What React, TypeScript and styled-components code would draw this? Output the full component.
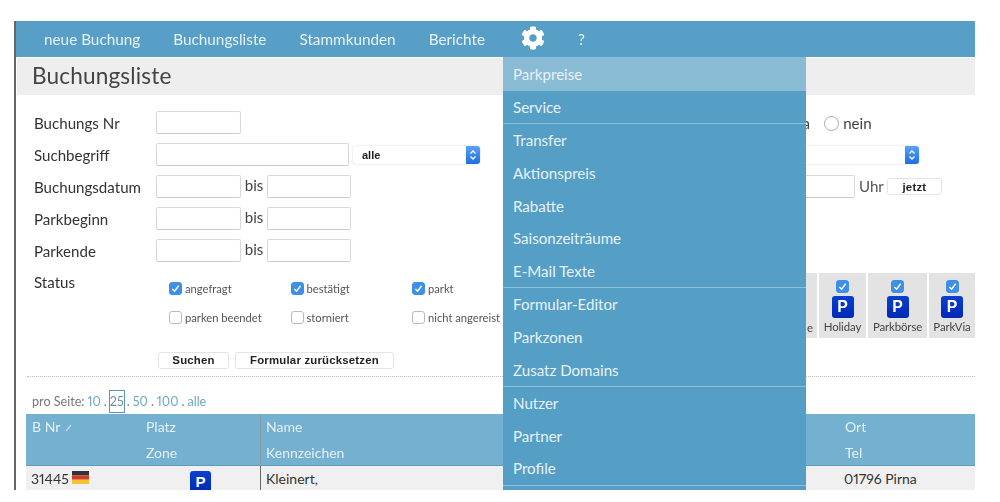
import React from "react";
import styled, { createGlobalStyle } from "styled-components";
import { FaCog } from "react-icons/fa";

const Global = createGlobalStyle`
  html, body { margin: 0; padding: 0; background: #fff; }
  body { font-family: "Lato", "Open Sans", "Liberation Sans", sans-serif; color: #333; }
  * { box-sizing: border-box; }
`;

const Soft = styled.div`
  width: 1000px;
  height: 502px;
  padding: 21px 0 0 14px;
  overflow: hidden;
  filter: blur(0.55px);
`;
const Frame = styled.div`
  position: relative;
  width: 961px;
  height: 469px;
  border-left: 2px solid #666;
  overflow: hidden;
`;
const Nav = styled.nav`
  height: 36px;
  background: #579fc7;
  display: flex;
  align-items: center;
  gap: 33px;
  padding-left: 28px;
  color: #e8f2f7;
  font-size: 15.3px;
`;
const NavItem = styled.span``;
const GearWrap = styled.span`
  display: flex;
  margin: -3px 0 0 3px;
  color: #fff;
`;
const Title = styled.h1`
  margin: 1px 0 0 1px;
  height: 37px;
  background: #eee;
  font-size: 22.6px;
  font-weight: 400;
  line-height: 35px;
  padding-left: 15px;
  color: #444;
  letter-spacing: 0.15px;
`;
const FormArea = styled.div`
  display: flex;
  height: 282px;
  padding-top: 16px;
`;
const LeftCol = styled.div`
  width: 497px;
  flex: none;
  padding-left: 18px;
`;
const RightCol = styled.div`
  flex: 1;
  padding-left: 200px;
  min-width: 0;
`;
const Row = styled.div`
  height: 32.1px;
  display: flex;
  align-items: flex-start;
  font-size: 15.1px;
`;
const Label = styled.label`
  width: 122px;
  flex: none;
  line-height: 25px;
  color: #333;
`;
const TextInput = styled.input<{ $w: number }>`
  width: ${(p) => p.$w}px;
  height: 23px;
  border: 1px solid #d8d8d8;
  border-bottom-color: #ccc;
  border-radius: 2px;
  background: #fff;
  padding: 0;
  flex: none;
`;
const Bis = styled.span`
  width: 26px;
  text-align: center;
  line-height: 21px;
  flex: none;
  color: #444;
`;
const SelectBox = styled.div<{ $w: number }>`
  width: ${(p) => p.$w}px;
  height: 18px;
  margin: 2.5px 0 0 4px;
  display: flex;
  justify-content: space-between;
  align-items: center;
  padding-left: 9px;
  background: #fff;
  border-radius: 3px;
  box-shadow: 0 0 2px #ccc;
  font: 700 11px "Liberation Sans", sans-serif;
  color: #222;
  flex: none;
`;
const SelectArrow = styled.span`
  width: 14px;
  height: 18px;
  border-radius: 0 3px 3px 0;
  background: linear-gradient(#5aa2f5, #1e6fe0);
  display: flex;
  align-items: center;
  justify-content: center;
`;
const StatusRow = styled.div`
  display: flex;
  height: 85px;
  font-size: 15.1px;
`;
const StatusLabel = styled.span`
  width: 135px;
  flex: none;
  line-height: 20px;
  margin-top: 1px;
  color: #333;
`;
const CheckGrid = styled.div`
  display: grid;
  grid-template-columns: 121.5px 121.5px 90px;
  grid-auto-rows: 29.5px;
  margin-top: 2px;
`;
const CheckItem = styled.div`
  display: flex;
  align-items: center;
  gap: 3px;
  font-size: 11.2px;
  color: #555;
  white-space: nowrap;
  height: 20px;
  margin-top: 5px;
`;
const Box = styled.span<{ $on?: boolean }>`
  width: 13px;
  height: 13px;
  border-radius: 3px;
  flex: none;
  display: flex;
  align-items: center;
  justify-content: center;
  background: ${(p) => (p.$on ? "#3d8fe8" : "#fff")};
  border: 1px solid ${(p) => (p.$on ? "#3d8fe8" : "#bbb")};
`;
const Buttons = styled.div`
  display: flex;
  gap: 6px;
  padding-left: 124px;
  margin-top: -4.5px;
`;
const Btn = styled.button<{ $w: number }>`
  width: ${(p) => p.$w}px;
  height: 17px;
  padding: 0;
  background: #fff;
  border: 1px solid #e4e4e4;
  border-radius: 3px;
  font: 700 11.4px "Liberation Sans", sans-serif;
  color: #222;
  letter-spacing: 0.2px;
`;
const RadioRow = styled.div`
  height: 32.1px;
  display: flex;
  align-items: center;
  padding-bottom: 8px;
  font-size: 15.1px;
  color: #444;
  padding-left: 86px;
`;
const Radio = styled.span`
  width: 15px;
  height: 15px;
  border: 1px solid #aaa;
  border-radius: 50%;
  margin: 0 4px 0 14px;
`;
const TimeRow = styled(Row)`
  align-items: flex-start;
`;
const Uhr = styled.span`
  margin-left: 4px;
  line-height: 22px;
  color: #555;
`;
const NowBtn = styled(Btn)`
  margin: 3px 0 0 3px;
`;
const Tiles = styled.div`
  display: flex;
  justify-content: flex-end;
  gap: 2px;
  margin: 65.5px 0 0 0;
`;
const Tile = styled.div<{ $w: number }>`
  width: ${(p) => p.$w}px;
  height: 65px;
  background: #e3e3e3;
  display: flex;
  flex-direction: column;
  align-items: center;
  padding-top: 7px;
  font-size: 11.4px;
  color: #444;
  flex: none;
`;
const TileEnd = styled(Tile)`
  align-items: flex-end;
  justify-content: flex-end;
  padding: 0 4px 4px 0;
`;
const TileName = styled.span`
  margin-top: 2px;
  white-space: nowrap;
  letter-spacing: -0.1px;
`;
const PSign = styled.span<{ $size: number; $gap: number }>`
  width: ${(p) => p.$size}px;
  height: ${(p) => p.$size}px;
  border-radius: 3px;
  background: linear-gradient(#0a3fd0, #0029b5);
  color: #fff;
  display: flex;
  align-items: center;
  justify-content: center;
  font: 700 ${(p) => p.$size * 0.72}px "Liberation Sans", sans-serif;
  flex: none;
  margin-top: ${(p) => p.$gap}px;
`;
const Dotted = styled.div`
  margin-left: 11px;
  border-top: 1px dotted #bbb;
  margin-top: -1px;
`;
const PerPage = styled.div`
  height: 37px;
  margin-left: 16px;
  display: flex;
  align-items: center;
  padding-top: 11px;
  font-size: 12.6px;
  color: #777;
  gap: 3px;
  white-space: pre;
  font-feature-settings: "pnum";
`;
const PageLink = styled.span<{ $active?: boolean }>`
  color: #6fa6c6;
  ${(p) =>
    p.$active
      ? "border: 1px solid #5e94ad; padding: 3px 0; color:#6b8ea3; margin: 0 -1px;"
      : ""}
`;
const Table = styled.div`
  margin-left: 10px;
  display: grid;
  grid-template-columns: 114px 120px 579px 136px;
`;
const Head = styled.div<{ $line?: boolean }>`
  height: 51.5px;
  background: #74b0cf;
  border-bottom: 1px solid #5e9cbe;
  color: #e6f1f6;
  font-size: 14px;
  display: grid;
  grid-auto-rows: 25.5px;
  align-items: center;
  padding-left: ${(p) => (p.$line ? "5px" : "6px")};
  ${(p) => (p.$line ? "border-left: 1px solid #8a9aa3;" : "")}
`;
const SortMark = styled.svg`
  margin-left: 5px;
  opacity: 0.7;
`;
const Cell = styled.div<{ $line?: boolean }>`
  height: 26px;
  background: #f0f0f0;
  font-size: 14px;
  color: #333;
  display: flex;
  gap: 3px;
  padding: 4px 0 0 5px;
  font-feature-settings: "pnum";
  ${(p) => (p.$line ? "border-left: 1px solid #666;" : "")}
`;
const IconCell = styled(Cell)`
  padding: 3px 0 0 50px;
`;
const Flag = styled.svg`
  margin-top: 1px;
`;
const Menu = styled.div`
  position: absolute;
  left: 487px;
  top: 36px;
  width: 303px;
  background: #559fc6;
  border-top: 1px solid #8dbdd6;
  height: 440px;
`;
const MenuItem = styled.div<{ $active?: boolean; $rule?: boolean }>`
  height: ${(p) => (p.$rule ? "33.6px" : "32.6px")};
  padding-left: 10px;
  display: flex;
  align-items: center;
  font-size: 15.1px;
  color: #e8f2f7;
  background: ${(p) => (p.$active ? "#89bbd4" : "transparent")};
  border-bottom: ${(p) => (p.$rule ? "1.5px solid #90c0d9" : "none")};
`;

const Check = () => (
  <svg width="9" height="9" viewBox="0 0 10 10" fill="none" stroke="#fff" strokeWidth="1.6">
    <path d="M1.5 5.5 4 8l4.5-6" />
  </svg>
);
const Updown = () => (
  <svg width="8" height="12" viewBox="0 0 8 12" fill="none" stroke="#fff" strokeWidth="1.3">
    <path d="M1.5 4.5 4 2l2.5 2.5M1.5 7.5 4 10l2.5-2.5" />
  </svg>
);

const statuses: [string, boolean][] = [
  ["angefragt", true],
  ["bestätigt", true],
  ["parkt", true],
  ["parken beendet", false],
  ["storniert", false],
  ["nicht angereist", false],
];
const tiles: [string, number][] = [
  ["Holiday", 47],
  ["Parkbörse", 59],
  ["ParkVia", 46],
];
const menu: [string, boolean?][] = [
  ["Parkpreise"],
  ["Service", true],
  ["Transfer"],
  ["Aktionspreis"],
  ["Rabatte"],
  ["Saisonzeiträume"],
  ["E-Mail Texte", true],
  ["Formular-Editor"],
  ["Parkzonen"],
  ["Zusatz Domains", true],
  ["Nutzer"],
  ["Partner"],
  ["Profile", true],
];

export default function App() {
  return (
    <Soft>
      <Global />
      <Frame>
        <Nav>
          <NavItem>neue Buchung</NavItem>
          <NavItem>Buchungsliste</NavItem>
          <NavItem>Stammkunden</NavItem>
          <NavItem>Berichte</NavItem>
          <GearWrap>
            <FaCog size={24} />
          </GearWrap>
          <NavItem>?</NavItem>
        </Nav>
        <Title>Buchungsliste</Title>
        <FormArea>
          <LeftCol>
            <Row>
              <Label>Buchungs Nr</Label>
              <TextInput $w={85} />
            </Row>
            <Row>
              <Label>Suchbegriff</Label>
              <TextInput $w={193} />
              <SelectBox $w={126.5}>
                alle
                <SelectArrow>
                  <Updown />
                </SelectArrow>
              </SelectBox>
            </Row>
            <Row>
              <Label>Buchungsdatum</Label>
              <TextInput $w={85} />
              <Bis>bis</Bis>
              <TextInput $w={84} />
            </Row>
            <Row>
              <Label>Parkbeginn</Label>
              <TextInput $w={85} />
              <Bis>bis</Bis>
              <TextInput $w={84} />
            </Row>
            <Row>
              <Label>Parkende</Label>
              <TextInput $w={85} />
              <Bis>bis</Bis>
              <TextInput $w={84} />
            </Row>
            <StatusRow>
              <StatusLabel>Status</StatusLabel>
              <CheckGrid>
                {statuses.map(([name, on]) => (
                  <CheckItem key={name}>
                    <Box $on={on}>{on && <Check />}</Box>
                    {name}
                  </CheckItem>
                ))}
              </CheckGrid>
            </StatusRow>
            <Buttons>
              <Btn $w={71}>Suchen</Btn>
              <Btn $w={159}>Formular zurücksetzen</Btn>
            </Buttons>
          </LeftCol>
          <RightCol>
            <RadioRow>
              ja
              <Radio />
              nein
            </RadioRow>
            <Row>
              <SelectBox $w={202}>
                <span />
                <SelectArrow>
                  <Updown />
                </SelectArrow>
              </SelectBox>
            </Row>
            <TimeRow>
              <TextInput $w={142} />
              <Uhr>Uhr</Uhr>
              <NowBtn $w={55}>jetzt</NowBtn>
            </TimeRow>
            <Tiles>
              <TileEnd $w={40}>e</TileEnd>
              {tiles.map(([name, w]) => (
                <Tile key={name} $w={w}>
                  <Box $on>
                    <Check />
                  </Box>
                  <PSign $size={22} $gap={3}>
                    P
                  </PSign>
                  <TileName>{name}</TileName>
                </Tile>
              ))}
            </Tiles>
          </RightCol>
        </FormArea>
        <Dotted />
        <PerPage>
          pro Seite:
          <PageLink>10</PageLink>.<PageLink $active>25</PageLink>.<PageLink>50</PageLink>.
          <PageLink>100</PageLink>.<PageLink>alle</PageLink>
        </PerPage>
        <Table>
          <Head>
            <span>
              B Nr
              <SortMark width="7" height="8" viewBox="0 0 7 8" fill="none" stroke="#e6f1f6" strokeWidth="1.2">
                <path d="M1 7 6 1" />
              </SortMark>
            </span>
          </Head>
          <Head>
            <span>Platz</span>
            <span>Zone</span>
          </Head>
          <Head $line>
            <span>Name</span>
            <span>Kennzeichen</span>
          </Head>
          <Head>
            <span>Ort</span>
            <span>Tel</span>
          </Head>
          <Cell>
            31445
            <Flag width="17" height="13" viewBox="0 0 17 13">
              <rect width="17" height="4.4" y="0" fill="#333" />
              <rect width="17" height="4.3" y="4.4" fill="#d03a2a" />
              <rect width="17" height="4.3" y="8.7" fill="#f2c230" />
            </Flag>
          </Cell>
          <IconCell>
            <PSign $size={21} $gap={2}>
              P
            </PSign>
          </IconCell>
          <Cell $line>Kleinert,</Cell>
          <Cell>01796 Pirna</Cell>
        </Table>
        <Menu>
          {menu.map(([name, rule], i) => (
            <MenuItem key={name} $active={i === 0} $rule={rule}>
              {name}
            </MenuItem>
          ))}
        </Menu>
      </Frame>
    </Soft>
  );
}
